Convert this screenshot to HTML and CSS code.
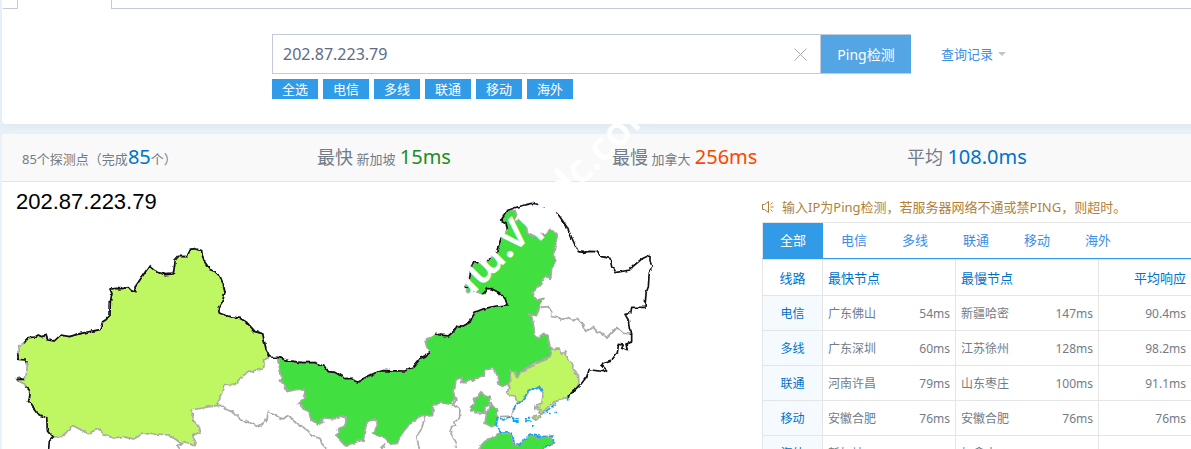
FILE: index.html
```html
<!DOCTYPE html>
<html lang="zh-CN">
<head>
<meta charset="utf-8">
<title>Ping检测</title>
<link rel="stylesheet" href="styles.css">
</head>
<body>
<div class="page">
  <section class="search-card">
    <div class="tab-strip"><span class="tab-prev"></span><span class="tab-current"></span><span class="tab-rest"></span></div>
    <form class="search">
      <div class="search-row">
        <div class="field">
          <input class="host" type="text" value="202.87.223.79" aria-label="IP">
          <button class="clear" type="button" aria-label="清除"><svg width="13" height="13" viewBox="0 0 13 13"><path d="M.5 .5l12 12M12.500 .5l-12 12" fill="none" stroke="#aaa"/></svg></button>
        </div>
        <button class="submit" type="button">Ping检测</button>
        <a class="history" href="#">查询记录<svg width="8" height="4" viewBox="0 0 8 4"><path d="M0 0h8L4 4z" fill="#c4c4c4"/></svg></a>
      </div>
      <div class="lines">
        <button type="button">全选</button><button type="button">电信</button><button type="button">多线</button><button type="button">联通</button><button type="button">移动</button><button type="button">海外</button>
      </div>
    </form>
  </section>

  <section class="result">
    <div class="stats">
      <p>85个探测点（完成<b class="blue">85</b>个）</p>
      <p><span class="label">最快</span> 新加坡 <b class="green">15ms</b></p>
      <p><span class="label">最慢</span> 加拿大 <b class="red">256ms</b></p>
      <p><span class="label">平均</span> <b class="blue">108.0ms</b></p>
    </div>
    <div class="detail">
      <svg class="map" viewBox="6 -129 2280 801" role="img" aria-label="202.87.223.79">
        <filter id="rough" x="0" y="-129" width="2280" height="801" filterUnits="userSpaceOnUse" color-interpolation-filters="sRGB">
          <feTurbulence type="fractalNoise" baseFrequency="0.06" numOctaves="2" seed="4"/>
          <feDisplacementMap in="SourceGraphic" scale="11" xChannelSelector="R" yChannelSelector="G"/>
        </filter>
        <text x="48" y="-48" class="map-title">202.87.223.79</text>
        <g filter="url(#rough)">
        <g class="province">
          <path class="lime" d="M160 636L142 615 140 578 118 570 98 545 85 528 90 510 88 495 77 485 75 478 50 465 55 458 75 463 80 440 82 412 75 405 55 403 53 385 58 378 56 362 72 355 85 338 105 336 115 330 125 335 138 331 143 345 163 348 182 330 208 335 240 326 300 314 305 300 308 290 318 284 330 272 331 230 336 206 330 192 385 188 392 196 408 203 405 187 448 123 465 138 495 149 520 147 526 105 535 94 562 95 570 73 583 71 605 77 606 92 612 108 630 134 643 138 660 154 669 176 675 200 667 230 655 248 658 264 680 273 720 280 740 292 765 320 788 326 792 345 798 372 810 396 790 405 793 418 790 432 762 436 760 442 750 438 725 455 705 478 675 478 668 505 655 530 648 542 574 555 580 566 578 585 598 605 601 620 578 632 586 650 582 662 552 650 545 658 530 645 505 630 470 627 460 629 425 624 415 635 400 642 375 636 348 641 312 630 305 617 292 612 265 626 245 616 220 602 205 615 190 634z"/>
          <path class="green-area" d="M832 397L865 407 905 413 945 413 975 425 985 440 1005 442 1035 461 1058 460 1062 467 1073 471 1095 458 1125 444 1150 437 1215 438 1240 426 1262 400 1290 383 1280 368 1275 350 1280 342 1305 325 1318 330 1345 333 1360 320 1372 302 1390 303 1410 292 1415 280 1425 262 1455 250 1490 243 1522 240 1515 220 1498 203 1475 191 1460 191 1450 207 1425 200 1403 203 1392 187 1405 173 1410 135 1422 108 1450 120 1472 100 1488 85 1505 35 1522 15 1518 -7 1502 -15 1520 -43 1545 -43 1550 -30 1540 -10 1560 -15 1578 0 1582 20 1595 33 1640 25 1650 10 1675 33 1662 75 1665 110 1655 130 1652 163 1640 150 1620 180 1598 203 1610 225 1632 220 1620 240 1615 260 1606 272 1585 267 1595 275 1600 295 1605 330 1615 340 1635 325 1645 340 1650 365 1658 373 1650 395 1625 405 1605 413 1570 435 1552 458 1542 440 1530 435 1532 470 1528 483 1498 478 1490 450 1480 430 1455 435 1452 455 1430 460 1420 467 1405 465 1392 477 1385 473 1385 455 1368 465 1365 485 1358 500 1365 520 1352 538 1325 534 1300 537 1298 572 1265 575 1235 590 1210 620 1200 635 1192 655 1170 658 1155 642 1120 625 1132 600 1125 582 1102 590 1095 615 1090 645 1035 662 1010 635 1018 622 1015 612 1035 600 1038 590 1035 575 1000 582 965 578 968 590 955 600 932 583 928 565 895 537 915 520 912 492 885 495 860 500 855 482 838 465 845 455z"/>
          <g transform="translate(1320 255)">
            <path class="lime" d="M338 115L355 118 365 132 375 125 385 150 402 165 400 180 415 195 417 220 410 232 383 262 370 268 345 275 325 290 300 315 297 307 305 300 284 298 285 290 297 293 293 283 305 280 310 250 300 235 290 235 270 240 255 262 232 278 225 260 200 250 208 228 212 215 210 180 222 185 232 203 250 180 285 165 305 150 330 140z"/>
            <path class="lime" d="M280 322L300 317 302 322 284 331z"/>
            <path class="green-area" d="M105 308L103 300 92 300 92 290 105 285 100 265 115 260 125 245 132 258 150 258 152 270 145 285 135 290 135 310zM152 278L160 290 172 295 168 310 175 320 168 345 155 350 135 340 140 305 148 300z"/>
            <path class="green-area" d="M110 422L140 388 165 382 180 368 215 372 220 400 235 408 270 375 300 382 335 382 342 400 310 417 305 425z"/>
            <path class="edge" d="M302 -8L325 -10 335 5 335 20 350 22 365 28 380 24 400 32 412 25 430 45 440 64 460 48 470 68 480 66 500 82 530 52 550 70 575 72M232 278L220 300 216 318 180 320M170 215L175 225 190 227M208 228L200 250M38 245L48 270 40 285 60 300 58 325 45 335 47 347 35 350 30 365 38 380 50 400 48 417"/>
            <path class="coast" d="M222 300L225 290 240 277 255 262 262 245 275 238 290 236 295 228 305 245M216 318L200 325 190 330 172 320 168 345 180 365 212 366 220 380 222 400 238 404 270 372 300 380 340 378 340 400 310 415M383 262V272M348 280L310 310"/>
            <path class="island" d="M216 322h8v6h-8zM226 323h10v5h-10zM218 330h18v9h-18zM253 321h8v8h-8zM264 320h7v6h-7zM255 331h17v6h-17zM327 308h5v5h-5zM346 305h5v5h-5zM337 289h4v4h-4zM276 345h6v6h-6zM320 305h4v4h-4z"/>
          </g>
          <path class="edge" d="M648 542L670 541 678 553 695 560 705 570 715 570 720 585 745 590 770 604 788 598 792 587 800 587 805 562 850 582 863 572 895 600 905 603 925 618 935 633 960 640 965 655 980 672M540 672L530 660 545 658M832 397L845 455M1275 575L1265 610 1250 635 1258 672M1145 672L1155 655M790 405L810 396"/>
        </g>
        <g class="border">
          <path d="M146 672L148 648 160 636 142 615 140 578 118 570 98 545 85 528 90 510 88 495 77 485M75 463L50 463M82 412L75 405 55 403 53 385M72 355L85 338 105 336 115 330 125 335 138 331 143 345 163 348 182 330 208 335 240 326 300 314 305 300 308 290 318 284 330 272 331 230 336 206 330 192 350 190 360 192 385 188 392 196 408 203 405 187 448 123 465 138 495 149 520 147 526 105 535 94 562 95 570 73 583 71 605 77 606 92 612 108 630 134 643 138 660 154 669 176 675 200 667 230 655 248 658 264 680 273 720 280 740 292 765 320 788 326 792 345 798 372 810 396 832 397 865 407 905 413 945 413 975 425 985 440 1005 442 1035 461 1058 460 1062 467 1073 471 1095 458 1125 444 1150 437 1215 438 1240 426 1262 400 1290 383M1305 323L1318 330 1345 333 1360 320 1372 302 1390 303 1410 292 1415 280 1425 262 1455 250 1490 243 1522 240 1515 220 1498 203 1475 191 1460 191 1450 207M1405 190L1392 187M1405 160L1410 135 1422 108 1435 114M1462 108L1472 100M1488 85L1505 35M1522 15L1518 -7 1502 -15 1520 -43 1560 -57 1595 -65 1610 -63 1635 -53M1668 -41L1700 5 1725 60 1735 80 1750 82 1765 79 1790 80 1805 95 1830 100 1835 125 1845 143 1890 135"/>
          <path d="M1890 135L1900 123 1925 102 1950 90V110L1957 125 1948 140 1945 185 1938 205 1935 247 1895 247 1892 265 1875 268 1885 285 1888 310 1895 325V350L1878 357 1882 377 1865 370 1870 360 1855 358 1852 383 1835 405 1810 413 1805 420 1820 435 1810 440 1775 435 1768 433 1760 455 1745 475 1703 515"/>
        </g>
        </g>
      </svg>

      <div class="report">
        <p class="notice"><svg width="12" height="12" viewBox="0 0 12 12"><path d="M.5 3.500h2L6.500 .5v11l-4-3h-2zM8.500 6h3M8.500 3.500l2-2M8.500 8.500l2 2" fill="none" stroke="#b07f3a"/></svg>输入IP为Ping检测，若服务器网络不通或禁PING，则超时。</p>
        <nav class="tabs">
          <a class="active" href="#">全部</a><a href="#">电信</a><a href="#">多线</a><a href="#">联通</a><a href="#">移动</a><a href="#">海外</a>
        </nav>
        <table>
          <colgroup><col class="c-line"><col class="c-fast"><col class="c-slow"><col class="c-avg"></colgroup>
          <thead><tr><th>线路</th><th>最快节点</th><th>最慢节点</th><th>平均响应</th></tr></thead>
          <tbody>
            <tr><th>电信</th><td><div class="node"><span>广东佛山</span><span>54ms</span></div></td><td><div class="node"><span>新疆哈密</span><span>147ms</span></div></td><td>90.4ms</td></tr>
            <tr><th>多线</th><td><div class="node"><span>广东深圳</span><span>60ms</span></div></td><td><div class="node"><span>江苏徐州</span><span>128ms</span></div></td><td>98.2ms</td></tr>
            <tr><th>联通</th><td><div class="node"><span>河南许昌</span><span>79ms</span></div></td><td><div class="node"><span>山东枣庄</span><span>100ms</span></div></td><td>91.1ms</td></tr>
            <tr><th>移动</th><td><div class="node"><span>安徽合肥</span><span>76ms</span></div></td><td><div class="node"><span>安徽合肥</span><span>76ms</span></div></td><td>76ms</td></tr>
            <tr><th>海外</th><td>新加坡</td><td>加拿大</td><td></td></tr>
          </tbody>
        </table>
      </div>
    </div>
  </section>
  <svg class="watermark" width="700" height="360" aria-hidden="true"><g transform="translate(508 260) rotate(-45)"><text text-anchor="end">ɯɯɯ</text><text>.Vpsdc.com</text></g></svg>
</div>
</body>
</html>
```
FILE: styles.css
```css
* { box-sizing: border-box; }
body {
  margin: 0;
  height: 100vh;
  overflow: hidden;
  background: #eaf1f8;
  color: #727c88;
  font: 13px/20px "Noto Sans", "Noto Sans CJK SC", sans-serif;
}
button, input { font: inherit; }
p { margin: 0; }
a { text-decoration: none; }
.page { position: relative; min-width: 1202px; padding-left: 2px; }

.search-card {
  background: #fff;
  border-radius: 0 0 4px 4px;
  box-shadow: 0 4px 10px #dfe9f3;
  padding-bottom: 25px;
}
.tab-strip { display: flex; height: 9px; padding-left: 1px; }
.tab-strip span { border-bottom: 1px solid #c2cadc; }
.tab-strip .tab-prev { width: 15px; border-right: 1px solid #c2cadc; }
.tab-strip .tab-current { width: 93px; border-bottom: 0; }
.tab-strip .tab-rest { flex: 1; border-left: 1px solid #c2cadc; }

.search { width: 660px; margin: 25px auto 0; }
.search-row { display: flex; align-items: center; height: 40px; }
.field {
  display: flex;
  align-items: center;
  flex: 0 0 549px;
  height: 40px;
  border: 1px solid #c2cadc;
}
.host {
  flex: 1;
  height: 38px;
  padding: 0 10px;
  border: 0;
  outline: 0;
  background: none;
  color: #5d6a88;
  font-size: 16px;
}
.clear { display: flex; padding: 0 13px; border: 0; background: none; }
.submit {
  flex: 0 0 90px;
  height: 40px;
  padding: 2px 0 0;
  border: solid #c2cadc;
  border-width: 1px 0;
  background: #54a5e3;
  color: #fff;
  font-size: 14px;
}
.history {
  display: flex;
  align-items: center;
  gap: 5px;
  flex: none;
  margin-left: 30px;
  color: #3a8ee6;
}
.lines { display: flex; gap: 5px; margin-top: 5px; }
.lines button {
  width: 46px;
  height: 20px;
  padding: 0;
  border: 0;
  background: #329be8;
  color: #fff;
  line-height: 20px;
}

.result { margin-top: 10px; background: #fff; position: relative; }
.stats {
  display: grid;
  grid-template-columns: repeat(4, 1fr);
  align-items: center;
  height: 48px;
  padding-left: 20px;
  border-bottom: 1px solid #e5e5e5;
  background: #f9f9f9;
}
.stats p { white-space: nowrap; }
.stats b { font-size: 20px; font-weight: 400; }
.stats .label + b { margin-left: 1px; }
.stats .label { font-size: 18px; }
.blue { color: #0072c9; }
.green { color: #228b22; }
.red { color: #ff4500; }

.detail { display: flex; align-items: flex-start; }
.map { flex: 1; min-width: 0; display: block; }
.map-title { font: 66px "Liberation Sans", sans-serif; fill: #000; }
.province { stroke: #aaa; stroke-width: 5; stroke-linejoin: round; fill: none; }
.lime { fill: #bef761; }
.green-area { fill: #42df40; }
.province .coast { stroke: #18a0e8; stroke-dasharray: 18 4; }
.province .island { fill: #18a0e8; stroke: none; }
.border { fill: none; stroke: #111; stroke-width: 5; stroke-linejoin: round; }

.report { flex: 0 0 440px; padding: 15px 10px 0 0; }
.notice { display: flex; align-items: center; gap: 8px; color: #b07f3a; white-space: nowrap; }
.tabs {
  display: flex;
  gap: 1px;
  height: 37px;
  margin-top: 5px;
  border: 1px solid #e5e5e5;
  border-bottom-color: #329be8;
}
.tabs a { width: 60px; line-height: 35px; text-align: center; color: #3a8ee6; }
.tabs .active { background: #329be8; color: #fff; }
table { width: 100%; table-layout: fixed; border-collapse: collapse; font-size: 12px; }
.c-line { width: 60px; }
.c-fast { width: 133px; }
.c-slow { width: 143px; }
th, td { height: 35px; padding: 2px 5px 0; border: 1px solid #e5e5e5; text-align: left; font-weight: 400; }
thead th { height: 36px; padding-top: 0; font-size: 13px; }
th { color: #0072c9; }
th:first-child { text-align: center; }
th:last-child, td:last-child { text-align: right; }
tbody th { background: #f5fafe; }
.node { display: flex; justify-content: space-between; }

.watermark { position: absolute; left: 0; top: 0; pointer-events: none; }
.watermark text { font: 600 40px "Noto Sans", sans-serif; fill: #fff; }
```
